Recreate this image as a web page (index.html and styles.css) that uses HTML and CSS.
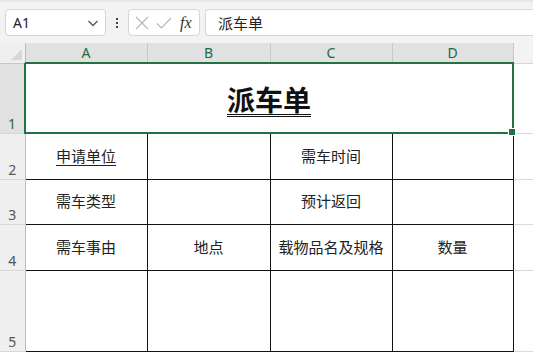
FILE: index.html
```html
<!DOCTYPE html>
<html lang="zh-CN">

<head>
  <meta charset="utf-8">
  <title>派车单</title>
  <link rel="stylesheet" href="styles.css">
</head>

<body>
  <!-- 上面的编辑栏 -->
  <div class="toolbar">
    <div class="nameBox">
      <span>A1</span>
      <svg width="12" height="8" viewBox="0 0 12 8"><path d="M1.5 2 L6 6.5 L10.5 2" fill="none" stroke="#555" stroke-width="1.3"/></svg>
    </div>
    <div class="dots"><i></i><i></i><i></i></div>
    <div class="fxBox">
      <svg width="16" height="16" viewBox="0 0 16 16"><path d="M2 2 L14 14 M14 2 L2 14" stroke="#b8b8b8" stroke-width="1.2"/></svg>
      <svg width="18" height="16" viewBox="0 0 18 16"><path d="M2 8.5 L6.5 13 L16 3" fill="none" stroke="#b8b8b8" stroke-width="1.2"/></svg>
      <span class="fx">fx</span>
    </div>
    <div class="formula">派车单</div>
  </div>

  <!-- 表格区域 -->
  <table class="sheet">
    <colgroup>
      <col class="rh">
      <col class="c1">
      <col class="c2">
      <col class="c3">
      <col class="c4">
      <col>
    </colgroup>
    <tr class="head">
      <th class="corner"><span></span></th>
      <th class="sel">A</th>
      <th class="sel">B</th>
      <th class="sel">C</th>
      <th class="sel">D</th>
      <th class="rest"></th>
    </tr>
    <tr class="r1">
      <th class="sel">1</th>
      <td colspan="4" class="title">
        <span>派车单</span>
        <i class="handle"></i>
      </td>
      <td class="empty"></td>
    </tr>
    <tr class="r2">
      <th>2</th>
      <td class="box"><u>申请单位</u></td>
      <td class="box"></td>
      <td class="box">需车时间</td>
      <td class="box"></td>
      <td class="empty"></td>
    </tr>
    <tr class="r3">
      <th>3</th>
      <td class="box">需车类型</td>
      <td class="box"></td>
      <td class="box">预计返回</td>
      <td class="box"></td>
      <td class="empty"></td>
    </tr>
    <tr class="r4">
      <th>4</th>
      <td class="box">需车事由</td>
      <td class="box">地点</td>
      <td class="box">载物品名及规格</td>
      <td class="box">数量</td>
      <td class="empty"></td>
    </tr>
    <tr class="r5">
      <th>5</th>
      <td class="box"></td>
      <td class="box"></td>
      <td class="box"></td>
      <td class="box"></td>
      <td class="empty"></td>
    </tr>
  </table>
</body>

</html>
```

FILE: styles.css
```css
* {
  margin: 0;
  padding: 0;
  box-sizing: border-box;
}

body {
  width: 533px;
  height: 353px;
  overflow: hidden;
  background: #fff;
  font-family: "Noto Sans", "Noto Sans CJK SC", sans-serif;
  color: #222;
}

/* 编辑栏 */
.toolbar {
  height: 43px;
  background: #f3f3f3;
  border-top: 2px solid #e6e6e6;
  display: flex;
  align-items: center;
  padding: 0 0 0 5px;
  gap: 0;
}

.nameBox {
  width: 101px;
  height: 27px;
  background: #fff;
  border: 1px solid #d6d6d6;
  border-radius: 4px;
  display: flex;
  align-items: center;
  justify-content: space-between;
  padding: 0 6px 0 7px;
  font-size: 14px;
  color: #222;
}

.dots {
  width: 22px;
  display: flex;
  flex-direction: column;
  align-items: center;
  gap: 2px;
}

.dots i {
  display: block;
  width: 2px;
  height: 2px;
  background: #444;
}

.fxBox {
  width: 72px;
  height: 27px;
  background: #fff;
  border: 1px solid #d6d6d6;
  border-radius: 4px;
  display: flex;
  align-items: center;
  padding: 0 4px 0 5px;
  gap: 5px;
}

.fx {
  font-family: "Liberation Serif", serif;
  font-style: italic;
  font-size: 16px;
  color: #333;
  margin-left: 2px;
}

.formula {
  flex: 1;
  height: 27px;
  margin-left: 5px;
  background: #fff;
  border: 1px solid #d6d6d6;
  border-right: none;
  border-radius: 4px 0 0 4px;
  font-family: "Noto Sans CJK SC", sans-serif;
  font-size: 15px;
  line-height: 25px;
  padding-left: 12px;
  color: #222;
}

/* 表格 */
.sheet {
  border-collapse: collapse;
  table-layout: fixed;
  width: 533px;
  font-family: "Noto Sans CJK SC", sans-serif;
}

.rh { width: 25px; }
.c1 { width: 122px; }
.c2 { width: 123px; }
.c3 { width: 122px; }
.c4 { width: 121px; }

.head th {
  height: 20px;
  background: #e1e1e1;
  font-family: "Noto Sans", sans-serif;
  font-weight: normal;
  font-size: 14px;
  line-height: 18px;
  color: #1d6a43;
  border-right: 1px solid #c8c8c8;
  border-bottom: 2px solid #217346;
  padding: 0;
}

.head .corner {
  background: #efefef;
  border-bottom: 1px solid #c8c8c8;
  border-right: 1px solid #bdbdbd;
  position: relative;
}

.corner span {
  position: absolute;
  right: 3px;
  bottom: 3px;
  width: 0;
  height: 0;
  border-left: 11px solid transparent;
  border-bottom: 11px solid #d6d6d6;
}

.head .rest {
  background: #f3f3f3;
  border-right: none;
  border-bottom: 1px solid #d6d6d6;
}

tr th {
  background: #efefef;
  font-family: "Noto Sans", sans-serif;
  font-weight: normal;
  font-size: 14px;
  color: #555;
  border-right: 1px solid #bdbdbd;
  border-bottom: 1px solid #d8d8d8;
  vertical-align: bottom;
  text-align: center;
  padding: 0 0 1px;
  line-height: 16px;
}

tr th.sel {
  color: #1d6a43;
  background: #e1e1e1;
}

.r1 { height: 70px; }
.r2 { height: 46px; }
.r3 { height: 45px; }
.r4 { height: 46px; }
.r5 { height: 81px; }

.title {
  border: 2px solid #217346;
  text-align: center;
  vertical-align: middle;
  position: relative;
  font-size: 28px;
  font-weight: bold;
  color: #111;
}

.title span {
  text-decoration: underline double;
  text-underline-offset: 3px;
  text-decoration-thickness: 1px;
  position: relative;
  top: 1px;
}

/* 右下角的小方块 */
.handle {
  position: absolute;
  right: -4px;
  bottom: -4px;
  width: 6px;
  height: 6px;
  background: #217346;
  border: 1px solid #fff;
  box-sizing: content-box;
}

.box {
  border: 1px solid #111;
  text-align: center;
  vertical-align: middle;
  font-size: 15px;
  color: #222;
  padding-bottom: 2px;
}

.box u {
  text-underline-offset: 3px;
}

.empty {
  border-bottom: 1px solid #dadada;
}
```
